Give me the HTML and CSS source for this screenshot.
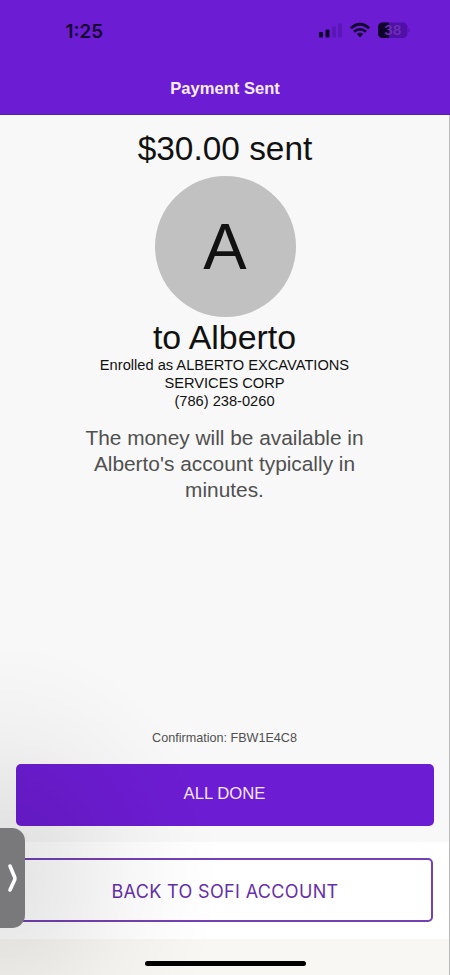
FILE: index.html
```html
<!DOCTYPE html>
<html lang="en">
<head>
<meta charset="utf-8">
<title>Payment Sent</title>
<link rel="stylesheet" href="styles.css">
</head>
<body>
<div class="screen">
  <header class="header">
    <div class="status">
      <span class="time">1:25</span>
      <svg class="status-icons" width="94" height="18" viewBox="0 0 94 18">
        <g fill="#10022a">
          <rect x="1" y="10" width="4" height="5.500" rx="1"/>
          <rect x="7.500" y="7.500" width="4" height="8" rx="1"/>
        </g>
        <g fill="#5a16b6">
          <rect x="14" y="4.500" width="4" height="11" rx="1"/>
          <rect x="20" y="1.500" width="4" height="14" rx="1"/>
        </g>
        <g fill="none" stroke="#10022a" stroke-width="2.600">
          <path d="M32.800 6.200Q42 -1.800 51.200 6.200"/>
          <path d="M36 9.800Q42 4.700 48 9.800"/>
        </g>
        <path d="M38.800 12Q42 9.400 45.200 12L42 15.200Z" fill="#10022a"/>
        <rect x="60" y="0.500" width="29.500" height="15.500" rx="4.500" fill="#5010a7"/>
        <path d="M71 .5H64.500A4.500 4.500 0 0 0 60 5V11.500A4.500 4.500 0 0 0 64.500 16H71Z" fill="#10022a"/>
        <path d="M90.500 6Q93 8.250 90.500 10.500Z" fill="#5010a7"/>
        <text class="battery" x="74.800" y="13" text-anchor="middle">38</text>
      </svg>
    </div>
    <h1 class="title">Payment Sent</h1>
  </header>
  <main class="content">
    <div class="amount">$30.00 sent</div>
    <div class="avatar">A</div>
    <div class="recipient">to Alberto</div>
    <div class="enrolled">Enrolled as ALBERTO EXCAVATIONS<br>SERVICES CORP<br>(786) 238-0260</div>
    <p class="message">The money will be available in<br>Alberto's account typically in<br>minutes.</p>
    <div class="confirmation">Confirmation: FBW1E4C8</div>
    <button class="done">ALL DONE</button>
  </main>
  <section class="back-panel"><button class="back">BACK TO SOFI ACCOUNT</button></section>
  <footer class="footer"><div class="home"></div></footer>
  <div class="shade"></div>
  <div class="edge"></div>
  <div class="drawer">
    <svg width="12" height="32" viewBox="0 0 12 32"><path d="M3 4L7.800 15.500V17.500L3 28" fill="none" stroke="#fff" stroke-width="3.600" stroke-linecap="round" stroke-linejoin="round"/></svg>
  </div>
</div>
</body>
</html>
```

FILE: styles.css
```css
* { box-sizing: border-box; }
body { margin: 0; font-family: "Liberation Sans", Arial, sans-serif; color: #111; }
button { font-family: inherit; padding: 0; margin: 0; }
.screen { position: relative; width: 450px; height: 975px; overflow: hidden; display: flex; flex-direction: column; }
.header { height: 115px; background: #6c1cd2; border-bottom: 1px solid #5c1cae; flex: none; }
.status { display: flex; justify-content: space-between; align-items: flex-start; height: 76px; padding: 22px 39px 0 65.500px; }
.time { font: 600 18.800px/19px Inter, sans-serif; color: #14042e; }
.status-icons { display: block; margin-right: -1px; }
.battery { font: 600 13.500px Inter, sans-serif; fill: #6d30b4; }
.title { margin: 0; font-size: 16.600px; line-height: 26px; text-align: center; color: #f8edff; }
.content { flex: none; height: 727px; background: #f8f8f8; display: flex; flex-direction: column; align-items: center; text-align: center; padding: 14px 16px 0; }
.amount { font-size: 33.400px; line-height: 40px; height: 47px; }
.avatar { width: 141px; height: 141px; border-radius: 50%; background: #c1c1c1; font-size: 65px; line-height: 141px; flex: none; }
.recipient { font-size: 33.900px; line-height: 40px; padding-right: 1px; }
.enrolled { font-size: 14.650px; line-height: 17.800px; white-space: nowrap; padding-right: 1px; }
.message { margin: 14.600px 0 0; font-size: 20.850px; line-height: 26.200px; color: #505050; white-space: nowrap; padding-right: 1px; }
.confirmation { margin-top: auto; font-size: 12.600px; line-height: 16px; color: #505050; padding-right: 1px; }
.done { width: 418px; height: 62px; margin: 18px 0 16px; border: 0; border-radius: 5px; background: #6c1cd2; color: #f6e8ff; font-size: 16.700px; line-height: 60px; padding: 0 1px 2px 0; flex: none; }
.back-panel { height: 97px; background: #fff; padding: 16px 17px; flex: none; }
.back { display: block; width: 416px; height: 64px; border: 2px solid #7440b4; border-radius: 5px; background: transparent; color: #662fab; font: 400 18px/60px Inter, sans-serif; letter-spacing: .35px; padding-top: 2px; }
.footer { flex: 1; background: #f8f7f3; padding-top: 22px; }
.home { width: 161px; height: 5px; margin: 0 auto; border-radius: 3px; background: #000; }
.shade { position: absolute; left: 0; top: 650px; width: 230px; height: 325px; pointer-events: none; background: radial-gradient(ellipse 220px 240px at 0 230px, rgba(0,0,0,.11), rgba(0,0,0,.075) 30%, rgba(0,0,0,.03) 60%, rgba(0,0,0,.01) 82%, transparent); }
.edge { position: absolute; right: 0; top: 115px; width: 1px; height: 860px; background: #b9b9b9; }
.drawer { position: absolute; left: 0; top: 828px; width: 25px; height: 100px; border-radius: 0 13px 13px 0; background: #79787b; display: flex; align-items: center; padding-left: 7px; }
.drawer svg { display: block; }
```
